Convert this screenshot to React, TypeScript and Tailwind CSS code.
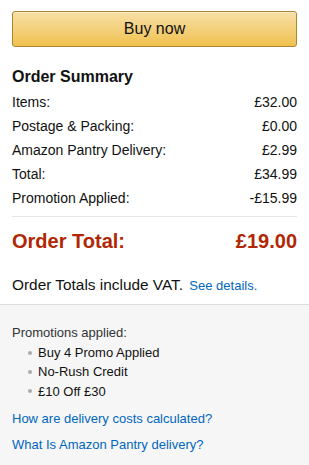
const rows = [
  { label: 'Items:', value: '£32.00' },
  { label: 'Postage & Packing:', value: '£0.00' },
  { label: 'Amazon Pantry Delivery:', value: '£2.99' },
  { label: 'Total:', value: '£34.99' },
  { label: 'Promotion Applied:', value: '-£15.99' },
];

const promos = ['Buy 4 Promo Applied', 'No-Rush Credit', '£10 Off £30'];

export default function App() {
  return (
    <div className="flex min-h-[465px] w-[309px] flex-col bg-white font-['Liberation_Sans',Arial,sans-serif] text-[#111]">
      {/* Summary */}
      <div className="px-3 pt-[11px] pb-[8px]">
        <button className="h-[36px] w-full rounded-[3px] border border-[#a88734] bg-gradient-to-b from-[#f7dfa5] to-[#f0c14b] text-[16px] text-[#111] shadow-[inset_0_1px_0_rgba(255,255,255,0.4)]">
          Buy now
        </button>

        <h2 className="mt-[20px] text-[16px] leading-[20px] font-bold">Order Summary</h2>

        <div className="mt-[3px]">
          {rows.map((row) => (
            <div key={row.label} className="flex h-[24px] items-center justify-between text-[14px]">
              <span>{row.label}</span>
              <span>{row.value}</span>
            </div>
          ))}
        </div>

        <div className="mt-[6px] border-t border-[#e7e7e7]" />

        <div className="mt-[12px] flex items-center justify-between text-[20px] leading-[24px] font-bold text-[#b12704]">
          <span>Order Total:</span>
          <span>£19.00</span>
        </div>

        <p className="mt-[22px] text-[15.4px] leading-[20px]">
          Order Totals include VAT. <a className="ml-[2px] text-[13px] text-[#0066c0]">See details.</a>
        </p>
      </div>

      {/* Promotions / help */}
      <div className="flex-1 border-t border-[#ddd] bg-[#f6f6f6] px-3 pt-[18px] pb-[13px] text-[13px]">
        <p className="leading-[20px] text-[#333]">Promotions applied:</p>
        <ul>
          {promos.map((p) => (
            <li key={p} className="flex items-center leading-[19.3px]">
              <span className="ml-[16px] mr-[6px] h-[4px] w-[4px] rounded-full bg-[#aaa]" />
              <span>{p}</span>
            </li>
          ))}
        </ul>
        <a className="mt-[8px] block leading-[19px] text-[#0066c0]">How are delivery costs calculated?</a>
        <a className="mt-[7px] block leading-[19px] text-[#0066c0]">What Is Amazon Pantry delivery?</a>
      </div>
    </div>
  );
}
